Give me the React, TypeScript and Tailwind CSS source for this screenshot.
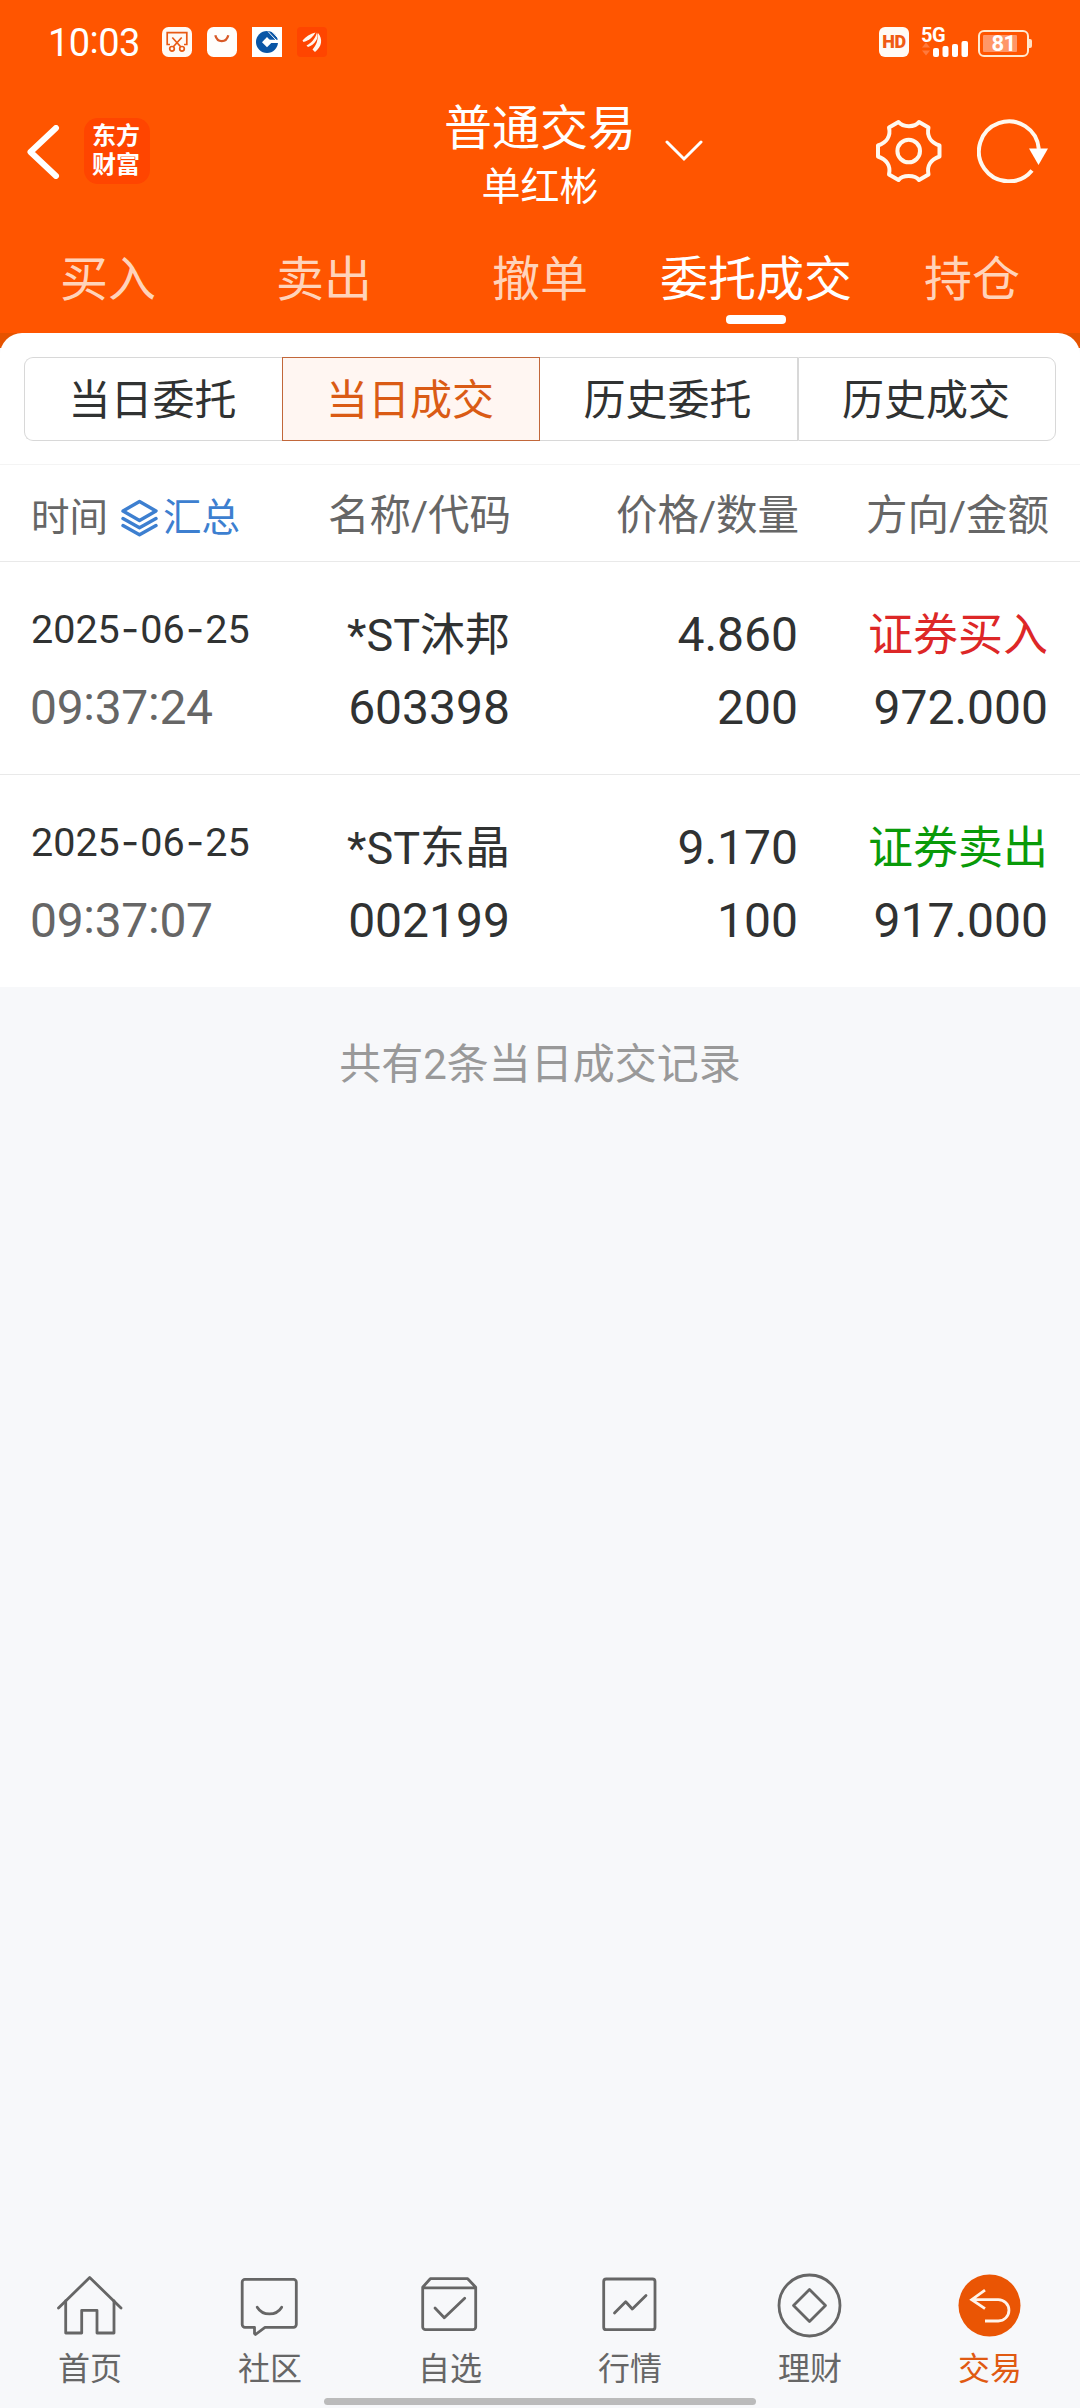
import type { ReactNode } from 'react';
import { clsx } from 'clsx';

type Deal = {
  id: string;
  date: string[];
  time: string[];
  name: string;
  code: string;
  price: string;
  amount: string;
  side: 'buy' | 'sell';
  total: string;
};

const navTabs = ['买入', '卖出', '撤单', '委托成交', '持仓'];
const filters = ['当日委托', '当日成交', '历史委托', '历史成交'];

const deals: Deal[] = [
  {
    id: '603398',
    date: ['2025', '06', '25'],
    time: ['09', '37', '24'],
    name: '*ST沐邦',
    code: '603398',
    price: '4.860',
    amount: '200',
    side: 'buy',
    total: '972.000',
  },
  {
    id: '002199',
    date: ['2025', '06', '25'],
    time: ['09', '37', '07'],
    name: '*ST东晶',
    code: '002199',
    price: '9.170',
    amount: '100',
    side: 'sell',
    total: '917.000',
  },
];

function StatusBar() {
  return (
    <div className="flex h-[84px] items-center pl-[48px] pr-[51px] text-white">
      <div className="flex w-[114px] pt-[2px] text-[38px] leading-[38px] tracking-[-0.6px]">
        10<span className="relative -top-[3px]">:</span>03
      </div>
      <div className="flex gap-[15px]">
        <svg width="30" height="30" viewBox="0 0 30 30" fill="none">
          <rect width="30" height="30" rx="6.5" fill="#fffaf5" />
          <g stroke="#e85a14" strokeWidth="1.7">
            <path d="M8 17.5H5.2V5.7h19.6v11.8H22" />
            <path d="M10.3 10.5l8.6 9.5M19.7 10.5L11.1 20" />
            <circle cx="10" cy="21.8" r="2.3" />
            <circle cx="20" cy="21.8" r="2.3" />
          </g>
        </svg>
        <svg width="30" height="30" viewBox="0 0 30 30" fill="none">
          <rect width="30" height="30" rx="6.5" fill="#fffefc" />
          <path d="M8.3 8.3c1 4 3.400 5.900 6.500 5.900s5.500-1.900 6.500-5.900" stroke="#d85a28" strokeWidth="2.3" />
        </svg>
        <svg width="30" height="30" viewBox="0 0 30 30">
          <rect width="30" height="30" fill="#fff" />
          <circle cx="15" cy="15" r="11" fill="#0a56a6" />
          <path d="M15 10l5 5.200-5 5-5-5z" fill="#fff" />
          <path d="M17 12.800h12v3.200H18z" fill="#fff" />
          <path d="M16 4.500l8 8.500M19 3.500l7.500 8" stroke="#fff" strokeWidth="1" />
        </svg>
        <svg width="30" height="30" viewBox="0 0 30 30">
          <rect width="30" height="30" rx="4" fill="#ff4500" />
          <g fill="#fff6ee">
            <path d="M5.500 13.500C9 9.500 13 7 18.500 5.500c-2 3.300-5.500 8-12 9.500z" />
            <path d="M9.500 18.500c5-2.500 8.500-6.500 10.500-13 2.500 5.500-2.500 12.500-9 14.500z" />
            <path d="M15.500 22.500c4-4.500 5.500-9 5.500-16.500 5 6 4 13.500-3 19z" />
          </g>
        </svg>
      </div>

      <div className="ml-auto flex items-center">
        <div className="flex h-[30px] w-[30px] items-center justify-center rounded-[6px] bg-[#fffaf5] text-[18px] font-black leading-none tracking-[-0.5px] text-[#f05a14]">
          HD
        </div>
        <div className="relative ml-[12px] h-[30px] w-[48px]">
          <span className="absolute left-0 top-[-2px] text-[20px] font-bold leading-[20px] tracking-[-0.4px]">
            5G
          </span>
          <svg className="absolute inset-0" width="48" height="30" viewBox="0 0 48 30" fill="#fff">
            <path d="M1 20.500l4-5 4 5zM1 23.500l4 5 4-5z" fill="#ff7a3c" />
            <rect x="12" y="21" width="6" height="9" rx="2" />
            <rect x="21.500" y="19" width="6" height="11" rx="2" />
            <rect x="31" y="17" width="6" height="13" rx="2" />
            <rect x="40.500" y="14" width="6.500" height="16" rx="2" />
          </svg>
        </div>
        <div className="relative ml-[9px] mt-[3px] flex h-[27px] w-[51px] items-center justify-center rounded-[6px] border-2 border-[#ffe9d0]">
          <div className="absolute left-[3px] top-[3px] h-[17px] w-[34px] rounded-[1px] bg-[#ff9768]" />
          <span className="relative text-[22px] font-bold leading-[22px] tracking-[-0.5px]">81</span>
          <div className="absolute -right-[5px] top-[7px] h-[9px] w-[3px] rounded-r-[2px] bg-[#ffe0c4]" />
        </div>
      </div>
    </div>
  );
}

function TitleBar() {
  return (
    <div className="grid h-[139px] grid-cols-[350px_380px_350px] text-white">
      <div className="flex items-start pl-[27px] pt-[34px]">
        <svg className="mt-[7px]" width="33" height="54" viewBox="0 0 33 54" fill="none">
          <path d="M29 3L3.500 27 29 51" stroke="#fff" strokeWidth="6" strokeLinecap="round" strokeLinejoin="round" />
        </svg>
        <div className="ml-[24px] flex h-[66px] w-[66px] flex-col items-center justify-center rounded-[14px] bg-[#ff4500] pr-[2px] text-[24px] font-bold leading-[29px]">
          <span>东方</span>
          <span>财富</span>
        </div>
      </div>

      <div className="relative flex flex-col items-center pt-[15px]">
        <h1 className="text-[48px] leading-[60px]">普通交易</h1>
        <p className="text-[39px] leading-[56px]">单红彬</p>
        <svg className="absolute left-[315px] top-[56px]" width="38" height="22" viewBox="0 0 38 22" fill="none">
          <path d="M2 2l17 17L36 2" stroke="#fff" strokeWidth="3" strokeLinecap="round" />
        </svg>
      </div>

      <div className="flex justify-end pr-[30px] pt-[35px]">
        <svg width="67" height="64" viewBox="0 0 67 64" fill="none" stroke="#fff8ee" strokeWidth="4" strokeLinejoin="round">
          <path d="M23.500 3C28 8.500 40 8.500 44 3l9.500 5.500C51.500 17 56 23.500 64.500 26.500v11C56 40.500 51.500 47 53.500 55.500L44 61C40 55.500 27.500 55.500 23.500 61L14 55.500C16 47 11.500 40.500 3 37.500v-11C11.500 23.500 16 17 14 8.500z" />
          <circle cx="33.700" cy="32" r="11.300" />
        </svg>
        <svg className="ml-[35px]" width="73" height="64" viewBox="0 0 73 64" fill="none">
          <path d="M61.800 30A30 30 0 1 0 55 51.500" stroke="#fff8ee" strokeWidth="4" />
          <path d="M52 29.500h19L61.500 46z" fill="#fff" />
        </svg>
      </div>
    </div>
  );
}

function Colon() {
  return <span className="relative -top-[4px]">:</span>;
}

function Hyphen() {
  return <span className="inline-block w-[20.500px] text-center font-['Inter']">-</span>;
}

function DealRow({ deal }: { deal: Deal }) {
  return (
    <div className="grid h-[213px] grid-cols-[230px_249px_288px_250px] border-t border-[#e9e9e9] pl-[31px] pt-[43px] text-[48px] text-[#303232]">
      <div>
        <div className="h-[73px] text-[39.500px] leading-[48px] whitespace-nowrap">
          {deal.date[0]}
          <Hyphen />
          {deal.date[1]}
          <Hyphen />
          {deal.date[2]}
        </div>
        <div className="-ml-[1px] leading-[60px] tracking-[-0.3px] text-[#666]">
          {deal.time[0]}
          <Colon />
          {deal.time[1]}
          <Colon />
          {deal.time[2]}
        </div>
      </div>
      <div className="text-right">
        <div className="h-[73px] pt-[1px] text-[45px] leading-[60px]">{deal.name}</div>
        <div className="leading-[60px]">{deal.code}</div>
      </div>
      <div className="text-right">
        <div className="h-[73px] leading-[60px]">{deal.price}</div>
        <div className="leading-[60px]">{deal.amount}</div>
      </div>
      <div className="text-right">
        <div
          className={clsx(
            'h-[73px] pt-[1px] text-[45px] leading-[60px]',
            deal.side === 'buy' ? 'text-[#dd2727]' : 'text-[#099a09]'
          )}
        >
          {deal.side === 'buy' ? '证券买入' : '证券卖出'}
        </div>
        <div className="leading-[60px]">{deal.total}</div>
      </div>
    </div>
  );
}

function TabIcon({ children }: { children: ReactNode }) {
  return (
    <svg
      width="66"
      height="66"
      viewBox="0 0 66 66"
      fill="none"
      stroke="#666"
      strokeWidth="2.8"
      strokeLinecap="round"
      strokeLinejoin="round"
    >
      {children}
    </svg>
  );
}

const bottomTabs: { label: string; icon: ReactNode; active?: boolean }[] = [
  {
    label: '首页',
    icon: (
      <>
        <path d="M1.500 35L32.700 4.500 64 35" />
        <path d="M8.700 28v32h16V37.300H40V60h17V28" />
      </>
    ),
  },
  {
    label: '社区',
    icon: (
      <>
        <path d="M8 6.300h48.500a2.800 2.800 0 0 1 2.800 2.800v42.400a2.800 2.800 0 0 1-2.800 2.800H28L18.500 61.500 17.500 60.500v-6.200H8a2.800 2.800 0 0 1-2.800-2.800V9.100A2.800 2.800 0 0 1 8 6.300z" />
        <path d="M20.200 34.200c5.500 9 19 9 24.500 0" />
      </>
    ),
  },
  {
    label: '自选',
    icon: (
      <>
        <path d="M5.700 14.200l7.600-8.500h37.400l8 8.500v39.700a2.800 2.800 0 0 1-2.800 2.800H8.500a2.800 2.800 0 0 1-2.800-2.800zM5.700 14.800h53" />
        <path d="M18 35l9.300 9.800 20.400-19.500" />
      </>
    ),
  },
  {
    label: '行情',
    icon: (
      <>
        <rect x="6.700" y="6" width="51.300" height="50.700" rx="2.500" />
        <path d="M17.500 40l11.200-11.300 6.600 7.300L49 22.500" />
      </>
    ),
  },
  {
    label: '理财',
    icon: (
      <>
        <circle cx="32.500" cy="32.500" r="30.500" />
        <path d="M32.500 16.500l16 16-16 16-16-16z" />
      </>
    ),
  },
  {
    label: '交易',
    active: true,
    icon: (
      <>
        <circle cx="32.500" cy="32.500" r="31" fill="#ea5504" stroke="none" />
        <path
          d="M28 17.200L14.700 26.700 28 35.700M14.700 26.700h26.600a10.650 10.650 0 0 1 0 21.300H28"
          stroke="#fff4ea"
          strokeLinecap="butt"
          strokeLinejoin="miter"
        />
      </>
    ),
  },
];

export default function App() {
  const activeTab = '委托成交';
  const activeFilter = '当日成交';

  return (
    <div className="flex h-[2408px] w-[1080px] flex-col bg-[#f7f8fa] font-['Roboto','Noto_Sans_CJK_SC',sans-serif]">
      <header className="h-[348px] bg-[linear-gradient(#ff5500_333px,#e65300_333px)]">
        <StatusBar />
        <TitleBar />
        <nav className="grid h-[110px] grid-cols-5">
          {navTabs.map((tab) => (
            <div
              key={tab}
              className={clsx(
                'flex flex-col items-center pt-[27px] text-[48px] leading-[60px]',
                tab === activeTab ? 'text-white' : 'text-[#ffd3ba]'
              )}
            >
              {tab}
              {tab === activeTab && <div className="mt-[5px] h-[9px] w-[60px] rounded-[4px] bg-white" />}
            </div>
          ))}
        </nav>
      </header>

      <main className="-mt-[15px] rounded-t-[22px] bg-white pt-[24px]">
        <div className="mx-[24px] grid h-[84px] grid-cols-4">
          {filters.map((filter) => (
            <button
              key={filter}
              className={clsx(
                'border pt-[4px] pr-[2px] text-[42px] leading-[60px] first:rounded-l-[9px] first:border-r-0 last:rounded-r-[9px]',
                filter === activeFilter
                  ? 'border-[#c2673a] bg-[#fff6f2] text-[#da5b15]'
                  : 'border-[#d8d8d8] text-[#303232] [&:nth-child(3)]:border-l-0'
              )}
            >
              {filter}
            </button>
          ))}
        </div>

        <div className="mt-[23px] grid h-[97px] grid-cols-[230px_250px_288px_250px] border-t border-[#f4f4f4] pl-[31px] pt-[21px] text-[41.500px] leading-[60px] text-[#666]">
          <div className="flex h-[60px] items-center pt-[3px] text-[38.500px] whitespace-nowrap">
            时间
            <svg className="ml-[13px] mr-[5px]" width="37" height="38" viewBox="0 0 37 38" fill="none" stroke="#3d7fd0" strokeWidth="3.400" strokeLinejoin="round" strokeLinecap="round">
              <path d="M18.500 2.500L35 12 18.500 21.500 2 12z" />
              <path d="M2 19.500l16.500 9.300L35 19.500M2 26.500l16.500 9.300L35 26.500" />
            </svg>
            <span className="text-[#3d7fd0]">汇总</span>
          </div>
          <div className="text-right">名称/代码</div>
          <div className="text-right">价格/数量</div>
          <div className="text-right">方向/金额</div>
        </div>

        {deals.map((deal) => (
          <DealRow key={deal.id} deal={deal} />
        ))}
      </main>

      <p className="mt-[48px] text-center text-[42px] leading-[60px] text-[#999]">
        共有{deals.length}条当日成交记录
      </p>

      <footer className="mt-auto h-[135px]">
        <div className="grid h-[125px] grid-cols-6">
          {bottomTabs.map((tab) => (
            <div
              key={tab.label}
              className={clsx(
                'flex flex-col items-center text-[32px] leading-[40px]',
                tab.active ? 'text-[#e05a12]' : 'text-[#666]'
              )}
            >
              <TabIcon>{tab.icon}</TabIcon>
              <span className="mt-[10px]">{tab.label}</span>
            </div>
          ))}
        </div>
        <div className="mx-auto h-[7px] w-[432px] rounded-full bg-[#bbb]" />
      </footer>
    </div>
  );
}
